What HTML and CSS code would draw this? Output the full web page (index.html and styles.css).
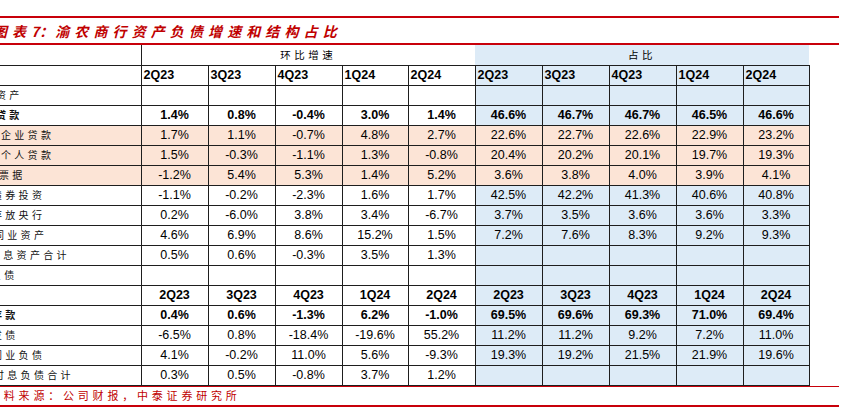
FILE: index.html
```html
<!DOCTYPE html>
<html lang="zh">
<head>
<meta charset="utf-8">
<link rel="stylesheet" href="styles.css">
</head>
<body>
<div class="page">
  <div class="title"><span class="t-pre">图表</span><span class="t-num">7：</span><span class="t-main">渝农商行资产负债增速和结构占比</span></div>
  <table class="tbl">
    <colgroup>
      <col class="c-lab"><col class="c67"><col class="c67"><col class="c67"><col class="c66"><col class="c67"><col class="c67"><col class="c67"><col class="c67"><col class="c67"><col class="c66">
    </colgroup>
    <tr class="h1"><td class="lab"></td><td colspan="5" class="grp">环比增速</td><td colspan="5" class="grp blue last">占比</td></tr>
    <tr class="h2"><td class="lab"></td><td>2Q23</td><td>3Q23</td><td>4Q23</td><td>1Q24</td><td>2Q24</td><td class="blue">2Q23</td><td class="blue">3Q23</td><td class="blue">4Q23</td><td class="blue">1Q24</td><td class="blue">2Q24</td></tr>
    <tr><td class="lab i-4">资产</td><td></td><td></td><td></td><td></td><td></td><td class="blue"></td><td class="blue"></td><td class="blue"></td><td class="blue"></td><td class="blue"></td></tr>
    <tr class="bold"><td class="lab i-4">贷款</td><td>1.4%</td><td>0.8%</td><td>-0.4%</td><td>3.0%</td><td>1.4%</td><td class="blue">46.6%</td><td class="blue">46.7%</td><td class="blue">46.7%</td><td class="blue">46.5%</td><td class="blue">46.6%</td></tr>
    <tr class="pink"><td class="lab i1">企业贷款</td><td>1.7%</td><td>1.1%</td><td>-0.7%</td><td>4.8%</td><td>2.7%</td><td>22.6%</td><td>22.7%</td><td>22.6%</td><td>22.9%</td><td>23.2%</td></tr>
    <tr class="pink"><td class="lab i1">个人贷款</td><td>1.5%</td><td>-0.3%</td><td>-1.1%</td><td>1.3%</td><td>-0.8%</td><td>20.4%</td><td>20.2%</td><td>20.1%</td><td>19.7%</td><td>19.3%</td></tr>
    <tr class="pink"><td class="lab i-1">票据</td><td>-1.2%</td><td>5.4%</td><td>5.3%</td><td>1.4%</td><td>5.2%</td><td>3.6%</td><td>3.8%</td><td>4.0%</td><td>3.9%</td><td>4.1%</td></tr>
    <tr><td class="lab i-8">债券投资</td><td>-1.1%</td><td>-0.2%</td><td>-2.3%</td><td>1.6%</td><td>1.7%</td><td class="blue">42.5%</td><td class="blue">42.2%</td><td class="blue">41.3%</td><td class="blue">40.6%</td><td class="blue">40.8%</td></tr>
    <tr><td class="lab i-8">存放央行</td><td>0.2%</td><td>-6.0%</td><td>3.8%</td><td>3.4%</td><td>-6.7%</td><td class="blue">3.7%</td><td class="blue">3.5%</td><td class="blue">3.6%</td><td class="blue">3.6%</td><td class="blue">3.3%</td></tr>
    <tr><td class="lab i-6">同业资产</td><td>4.6%</td><td>6.9%</td><td>8.6%</td><td>15.2%</td><td>1.5%</td><td class="blue">7.2%</td><td class="blue">7.6%</td><td class="blue">8.3%</td><td class="blue">9.2%</td><td class="blue">9.3%</td></tr>
    <tr><td class="lab i-10">生息资产合计</td><td>0.5%</td><td>0.6%</td><td>-0.3%</td><td>3.5%</td><td>1.3%</td><td class="blue"></td><td class="blue"></td><td class="blue"></td><td class="blue"></td><td class="blue"></td></tr>
    <tr><td class="lab i-9">负债</td><td></td><td></td><td></td><td></td><td></td><td class="blue"></td><td class="blue"></td><td class="blue"></td><td class="blue"></td><td class="blue"></td></tr>
    <tr class="bold"><td class="lab"></td><td>2Q23</td><td>3Q23</td><td>4Q23</td><td>1Q24</td><td>2Q24</td><td class="blue">2Q23</td><td class="blue">3Q23</td><td class="blue">4Q23</td><td class="blue">1Q24</td><td class="blue">2Q24</td></tr>
    <tr class="bold"><td class="lab i-8">存款</td><td>0.4%</td><td>0.6%</td><td>-1.3%</td><td>6.2%</td><td>-1.0%</td><td class="blue">69.5%</td><td class="blue">69.6%</td><td class="blue">69.3%</td><td class="blue">71.0%</td><td class="blue">69.4%</td></tr>
    <tr><td class="lab i-8">发债</td><td>-6.5%</td><td>0.8%</td><td>-18.4%</td><td>-19.6%</td><td>55.2%</td><td class="blue">11.2%</td><td class="blue">11.2%</td><td class="blue">9.2%</td><td class="blue">7.2%</td><td class="blue">11.0%</td></tr>
    <tr><td class="lab i-8">同业负债</td><td>4.1%</td><td>-0.2%</td><td>11.0%</td><td>5.6%</td><td>-9.3%</td><td class="blue">19.3%</td><td class="blue">19.2%</td><td class="blue">21.5%</td><td class="blue">21.9%</td><td class="blue">19.6%</td></tr>
    <tr><td class="lab i-6">付息负债合计</td><td>0.3%</td><td>0.5%</td><td>-0.8%</td><td>3.7%</td><td>1.2%</td><td class="blue"></td><td class="blue"></td><td class="blue"></td><td class="blue"></td><td class="blue"></td></tr>
  </table>
  <div class="foot">资料来源：公司财报，中泰证券研究所</div>
</div>
</body>
</html>
```
FILE: styles.css
```css
html, body {
  margin: 0;
  padding: 0;
  background: #ffffff;
  overflow: hidden;
}
.page {
  width: 839px;
  padding-top: 16px;
}
.title {
  border-top: 2px solid #c8000a;
  border-bottom: 2px solid #c8000a;
  height: 25px;
  line-height: 26px;
  color: #c00000;
  font-family: "Noto Sans CJK SC", sans-serif;
  font-size: 14px;
  font-style: italic;
  font-weight: 700;
  white-space: nowrap;
  text-indent: -7px;
}
.t-pre { letter-spacing: 5px; }
.t-num { letter-spacing: 0; }
.t-main { letter-spacing: 5.1px; margin-left: 2px; }

.tbl {
  border-collapse: collapse;
  table-layout: fixed;
  width: 809px;
  font-family: "Liberation Sans", Arial, sans-serif;
  font-size: 12.5px;
  color: #000;
}
.c-lab { width: 141px; }
.c67 { width: 67px; }
.c66 { width: 66px; }

.tbl td {
  height: 20px;
  padding: 0;
  box-sizing: border-box;
  border: 1px solid #1e1e1e;
  text-align: center;
  vertical-align: middle;
  white-space: nowrap;
  line-height: 18px;
}
.tbl td.lab {
  border-left: none;
  text-align: left;
  font-family: "Noto Sans CJK SC", sans-serif;
  font-size: 10px;
  letter-spacing: 3.3px;
  color: #111;
}
.tbl .h1 td { border-top: none; }
.tbl .h1 td.grp {
  font-family: "Noto Sans CJK SC", sans-serif;
  font-size: 10.5px;
  letter-spacing: 3.5px;
  border-left: none;
  border-right: none;
}
.tbl .h1 td.lab { border-right: 1px solid #1e1e1e; }
.tbl .h1 td.last { border-right: none; }
.tbl .h2 td {
  text-align: left;
  padding-left: 2px;
  font-weight: 700;
}
.bold td { font-weight: 700; }
.blue { background: #ddebf7; }
.pink td { background: #fce4d6; }

.i1 { text-indent: 1px; }
.i-1 { text-indent: -1px; }
.i-4 { text-indent: -4px; }
.i-6 { text-indent: -6px; }
.i-8 { text-indent: -8px; }
.i-9 { text-indent: -9px; }
.i-10 { text-indent: -10px; }

.foot {
  border-top: 1px solid #c8000a;
  border-bottom: 2px solid #c8000a;
  height: 18px;
  line-height: 17px;
  color: #c00000;
  font-family: "Noto Sans CJK SC", sans-serif;
  font-size: 11px;
  letter-spacing: 3.8px;
  text-indent: -11px;
  white-space: nowrap;
}
```
